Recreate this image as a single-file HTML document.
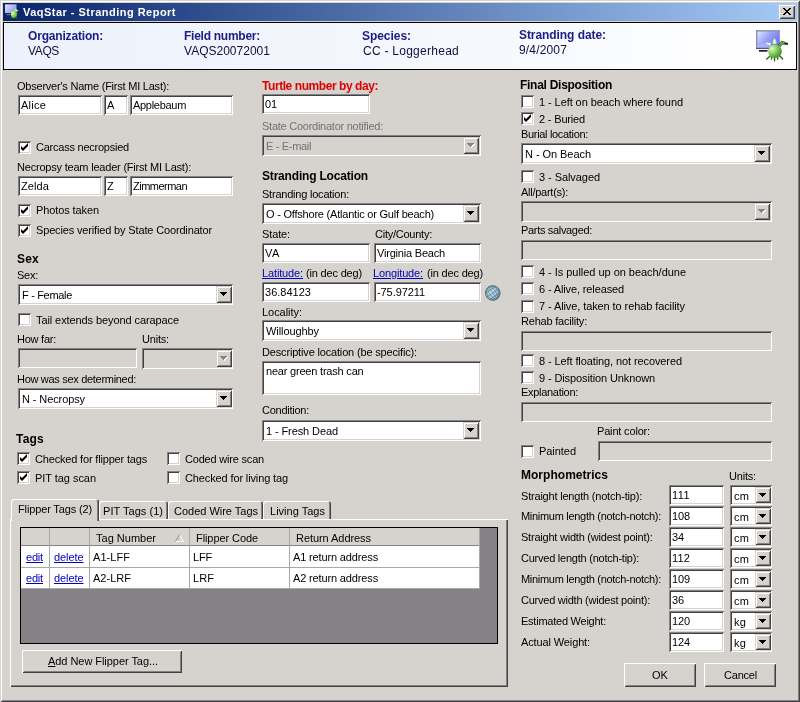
<!DOCTYPE html>
<html><head><meta charset="utf-8"><title>VaqStar - Stranding Report</title>
<style>
html,body{margin:0;padding:0;}
body{width:800px;height:702px;overflow:hidden;background:#d6d3ce;font-family:"Liberation Sans",sans-serif;font-size:11px;color:#000;}
#win{position:relative;width:800px;height:702px;overflow:hidden;background:transparent;will-change:transform;}
#win div{position:absolute;box-sizing:border-box;}
.t{white-space:nowrap;line-height:13px;font-size:11px;}
.b{font-weight:bold;}
.h12{font-size:12px;line-height:14px;font-weight:bold;}
.hd{font-size:12px;line-height:14px;color:#0e0e40;}
.hdb{font-weight:bold;color:#1c1c84;}
.red{color:#e00000;font-weight:bold;font-size:12px;line-height:14px;}
.gr{color:#737173;}
.lnk{color:#0000c0;text-decoration:underline;}
.wh{color:#fff;}
.tb{background:#fff;box-shadow:inset 1px 1px 0 #848284,inset -1px -1px 0 #fff,inset 2px 2px 0 #424142,inset -2px -2px 0 #d6d3ce;}
.tb.dis{background:#d6d3ce;}
.ck{width:13px;height:13px;background:#fff;box-shadow:inset 1px 1px 0 #848284,inset -1px -1px 0 #fff,inset 2px 2px 0 #424142,inset -2px -2px 0 #d6d3ce;}
.ck svg{position:absolute;left:0;top:0;}
.dd{background:#d6d3ce;box-shadow:inset 1px 1px 0 #d6d3ce,inset -1px -1px 0 #424142,inset 2px 2px 0 #fff,inset -2px -2px 0 #848284;}
.btn{background:#d6d3ce;box-shadow:inset 1px 1px 0 #fff,inset -1px -1px 0 #424142,inset 2px 2px 0 #d6d3ce,inset -2px -2px 0 #848284;}
</style></head>
<body>
<div id="win">
<div style="left:0;top:0;width:800px;height:702px;box-shadow:inset 1px 1px 0 #d6d3ce,inset -1px -1px 0 #424142,inset 2px 2px 0 #fff,inset -2px -2px 0 #848284"></div>
<div id="title" style="left:3px;top:3px;width:794px;height:18px;background:linear-gradient(to right,#08246b 0%,#a5cbf7 100%)"></div>
<svg style="position:absolute;left:3px;top:3px" width="18" height="18" viewBox="3 3 18 18"><defs><linearGradient id="scr2" x1="0" y1="0" x2="1" y2="0.800"><stop offset="0" stop-color="#e4e6ff"/><stop offset="1" stop-color="#8890ee"/></linearGradient><radialGradient id="shell2" cx="0.300" cy="0.350" r="0.800"><stop offset="0" stop-color="#dcf8c0"/><stop offset="0.500" stop-color="#8cd858"/><stop offset="1" stop-color="#3c8a20"/></radialGradient></defs><rect x="5" y="4.400" width="11.500" height="8.600" fill="url(#scr2)"/><rect x="6.500" y="14.300" width="4" height="0.800" fill="#9098c0"/><path d="M13.600 11.300L15.800 8.600L17.200 10L18.800 10.800L17 11.600z" fill="#c8f0a8"/><path d="M11.600 17.200L10.800 18.400M16.400 17.200L17 18.300M14 17.800L14 18.800" stroke="#2c6a1a" stroke-width="0.900" stroke-linecap="round"/><ellipse cx="14" cy="14.300" rx="3.200" ry="3.700" fill="url(#shell2)"/></svg>
<div id="t1" class="t b wh" style="left:23px;top:6px;letter-spacing:0.478px;">VaqStar - Stranding Report</div>
<div class="btn" style="left:779px;top:5px;width:16px;height:14px"></div>
<svg style="position:absolute;left:783px;top:8px" width="8" height="7" viewBox="0 0 8 7"><path d="M0 0h2v1h1v1h2v-1h1v-1h2v1h-1v1h-1v1h-1v1h1v1h1v1h1v1h-2v-1h-1v-1h-2v1h-1v1h-2v-1h1v-1h1v-1h1v-1h-1v-1h-1v-1h-1z" fill="#000" shape-rendering="crispEdges"/></svg>
<div style="left:3px;top:22px;width:794px;height:48px;background:linear-gradient(to right,#ecf1fb 0%,#f6f8fd 60%,#ffffff 95%);border:1px solid #000"></div>
<div id="t2" class="t hd hdb" style="left:28px;top:29px;letter-spacing:-0.180px;">Organization:</div>
<div id="t3" class="t hd" style="left:28px;top:44px;letter-spacing:-0.367px;">VAQS</div>
<div id="t4" class="t hd hdb" style="left:184px;top:29px;letter-spacing:-0.257px;">Field number:</div>
<div id="t5" class="t hd" style="left:184px;top:44px;letter-spacing:0.012px;">VAQS20072001</div>
<div id="t6" class="t hd hdb" style="left:362px;top:29px;letter-spacing:-0.045px;">Species:</div>
<div id="t7" class="t hd" style="left:363px;top:44px;letter-spacing:0.263px;">CC - Loggerhead</div>
<div id="t8" class="t hd hdb" style="left:519px;top:28px;letter-spacing:-0.068px;">Stranding date:</div>
<div id="t9" class="t hd" style="left:519px;top:43px;letter-spacing:0.160px;">9/4/2007</div>
<svg style="position:absolute;left:750px;top:26px" width="44" height="40" viewBox="0 0 44 40"><defs><linearGradient id="scr" x1="0" y1="0" x2="1" y2="0.600"><stop offset="0" stop-color="#e4e6ff"/><stop offset="0.500" stop-color="#9aa2f6"/><stop offset="1" stop-color="#6c76ee"/></linearGradient><radialGradient id="shell" cx="0.280" cy="0.320" r="0.850"><stop offset="0" stop-color="#e0f6d0"/><stop offset="0.400" stop-color="#90d264"/><stop offset="1" stop-color="#34801c"/></radialGradient></defs><rect x="6" y="4.300" width="23.900" height="18.500" fill="#a4aacc"/><rect x="6" y="4.300" width="23.900" height="1.300" fill="#858aa6"/><rect x="6" y="4.300" width="1.500" height="18" fill="#8a90b8"/><rect x="7.500" y="5.600" width="22" height="16.300" fill="url(#scr)"/><path d="M7.500 19.800C12 18.500 16 16 21 16.200L21 21.900H7.500z" fill="#b4bcf6" opacity="0.700"/><rect x="6" y="21.800" width="23.900" height="1.100" fill="#4a5078"/><rect x="9" y="24" width="8.500" height="1.700" fill="#1c1c24"/><path d="M15.400 17.300L17 16.500L21 17.600L20.200 19.400L17.500 18.300z" fill="#e8f6e4"/><path d="M28.300 19L31.500 15L34 15.800L37.900 17.500L37.600 18.700L32.200 18.300L30.600 20.600z" fill="#62b03a" stroke="#1e3c14" stroke-width="0.600"/><path d="M34.500 17.200L37.800 17.900" stroke="#10200c" stroke-width="1.100"/><path d="M20.200 29.900L16.700 33.100M29.800 29.900L32.600 32.900M24.500 31.500L24.500 34.800M21.800 31L21.400 33.100M27.500 31L27.900 33" stroke="#2a6418" stroke-width="1.400" stroke-linecap="round"/><path d="M24.500 12C26.500 14.300 26.800 16.300 26.300 18L22.800 18C22.200 16.300 22.600 14.300 24.500 12z" fill="#bfe8ac"/><ellipse cx="25" cy="25.200" rx="6.800" ry="6.800" fill="url(#shell)"/><path d="M24.500 13.300C25.500 14.600 25.600 15.900 25.200 17.200L23.800 17.200C23.400 15.900 23.600 14.600 24.500 13.300z" fill="#f6fff2"/></svg>
<div id="t10" class="t " style="left:17px;top:80px;letter-spacing:-0.225px;">Observer's Name (First MI Last):</div>
<div class="tb" style="left:18px;top:95px;width:84px;height:20px"></div>
<div id="t11" class="t in" style="left:21px;top:99px;letter-spacing:0.231px;">Alice</div>
<div class="tb" style="left:104px;top:95px;width:24px;height:20px"></div>
<div id="t12" class="t in" style="left:107px;top:99px;letter-spacing:0.656px;">A</div>
<div class="tb" style="left:130px;top:95px;width:103px;height:20px"></div>
<div id="t13" class="t in" style="left:133px;top:99px;letter-spacing:-0.295px;">Applebaum</div>
<div class="ck" style="left:18px;top:141px"><svg width="13" height="13" viewBox="0 0 13 13"><path d="M3 5v3l2 2 5-5V2L5 7z" fill="#000"/></svg></div>
<div id="t14" class="t " style="left:36px;top:141px;letter-spacing:-0.234px;">Carcass necropsied</div>
<div id="t15" class="t " style="left:17px;top:161px;letter-spacing:-0.204px;">Necropsy team leader (First MI Last):</div>
<div class="tb" style="left:18px;top:176px;width:84px;height:20px"></div>
<div id="t16" class="t in" style="left:21px;top:180px;letter-spacing:0.094px;">Zelda</div>
<div class="tb" style="left:104px;top:176px;width:24px;height:20px"></div>
<div id="t17" class="t in" style="left:107px;top:180px;letter-spacing:1.266px;">Z</div>
<div class="tb" style="left:130px;top:176px;width:103px;height:20px"></div>
<div id="t18" class="t in" style="left:133px;top:180px;letter-spacing:-0.519px;">Zimmerman</div>
<div class="ck" style="left:18px;top:204px"><svg width="13" height="13" viewBox="0 0 13 13"><path d="M3 5v3l2 2 5-5V2L5 7z" fill="#000"/></svg></div>
<div id="t19" class="t " style="left:36px;top:204px;letter-spacing:-0.102px;">Photos taken</div>
<div class="ck" style="left:18px;top:224px"><svg width="13" height="13" viewBox="0 0 13 13"><path d="M3 5v3l2 2 5-5V2L5 7z" fill="#000"/></svg></div>
<div id="t20" class="t " style="left:36px;top:224px;letter-spacing:-0.152px;">Species verified by State Coordinator</div>
<div id="t21" class="t h12" style="left:17px;top:252px;letter-spacing:0.214px;">Sex</div>
<div id="t22" class="t " style="left:17px;top:269px;letter-spacing:-0.254px;">Sex:</div>
<div class="tb" style="left:18px;top:284px;width:215px;height:21px"></div>
<div class="dd" style="left:216px;top:286px;width:16px;height:17px"><svg width="8" height="5" viewBox="0 0 8 5" style="position:absolute;left:4px;top:6px"><path d="M0 0h7v1h-1v1h-1v1h-1v1h-1v-1h-1v-1h-1v-1h-1z" fill="#000" shape-rendering="crispEdges"/></svg></div>
<div id="t23" class="t in" style="left:22px;top:289px;letter-spacing:-0.319px;">F - Female</div>
<div class="ck" style="left:18px;top:313px"></div>
<div id="t24" class="t " style="left:36px;top:314px;letter-spacing:-0.091px;">Tail extends beyond carapace</div>
<div id="t25" class="t " style="left:17px;top:333px;letter-spacing:-0.246px;">How far:</div>
<div id="t26" class="t " style="left:142px;top:333px;letter-spacing:-0.188px;">Units:</div>
<div class="tb dis" style="left:18px;top:348px;width:119px;height:20px"></div>
<div class="tb dis" style="left:142px;top:348px;width:91px;height:21px"></div>
<div class="dd" style="left:216px;top:350px;width:16px;height:17px"><svg width="8" height="5" viewBox="0 0 8 5" style="position:absolute;left:4px;top:6px"><path d="M1 1h7v1h-1v1h-1v1h-1v1h-1v-1h-1v-1h-1v-1h-1z" fill="#fff" shape-rendering="crispEdges"/><path d="M0 0h7v1h-1v1h-1v1h-1v1h-1v-1h-1v-1h-1v-1h-1z" fill="#848284" shape-rendering="crispEdges"/></svg></div>
<div id="t27" class="t " style="left:17px;top:373px;letter-spacing:-0.302px;">How was sex determined:</div>
<div class="tb" style="left:18px;top:388px;width:215px;height:21px"></div>
<div class="dd" style="left:216px;top:390px;width:16px;height:17px"><svg width="8" height="5" viewBox="0 0 8 5" style="position:absolute;left:4px;top:6px"><path d="M0 0h7v1h-1v1h-1v1h-1v1h-1v-1h-1v-1h-1v-1h-1z" fill="#000" shape-rendering="crispEdges"/></svg></div>
<div id="t28" class="t in" style="left:22px;top:393px;letter-spacing:-0.099px;">N - Necropsy</div>
<div id="t29" class="t h12" style="left:16px;top:432px;letter-spacing:0.219px;">Tags</div>
<div class="ck" style="left:17px;top:452px"><svg width="13" height="13" viewBox="0 0 13 13"><path d="M3 5v3l2 2 5-5V2L5 7z" fill="#000"/></svg></div>
<div id="t30" class="t " style="left:35px;top:453px;letter-spacing:-0.174px;">Checked for flipper tags</div>
<div class="ck" style="left:167px;top:452px"></div>
<div id="t31" class="t " style="left:185px;top:453px;letter-spacing:-0.196px;">Coded wire scan</div>
<div class="ck" style="left:17px;top:471px"><svg width="13" height="13" viewBox="0 0 13 13"><path d="M3 5v3l2 2 5-5V2L5 7z" fill="#000"/></svg></div>
<div id="t32" class="t " style="left:35px;top:472px;letter-spacing:-0.047px;">PIT tag scan</div>
<div class="ck" style="left:167px;top:471px"></div>
<div id="t33" class="t " style="left:185px;top:472px;letter-spacing:-0.126px;">Checked for living tag</div>
<div style="left:10px;top:519px;width:498px;height:168px;box-shadow:inset 1px 1px 0 #fff,inset -1px -1px 0 #424142,inset -2px -2px 0 #848284"></div>
<div style="left:99px;top:501px;width:69px;height:18px;background:#d6d3ce;border-radius:3px 3px 0 0;box-shadow:inset 1px 1px 0 #fff,inset -1px 0 0 #424142,inset -2px 0 0 #848284"></div>
<div id="t34" class="t " style="left:103px;top:505px;letter-spacing:0.040px;">PIT Tags (1)</div>
<div style="left:168px;top:501px;width:95px;height:18px;background:#d6d3ce;border-radius:3px 3px 0 0;box-shadow:inset 1px 1px 0 #fff,inset -1px 0 0 #424142,inset -2px 0 0 #848284"></div>
<div id="t35" class="t " style="left:174px;top:505px;letter-spacing:-0.011px;">Coded Wire Tags</div>
<div style="left:263px;top:501px;width:68px;height:18px;background:#d6d3ce;border-radius:3px 3px 0 0;box-shadow:inset 1px 1px 0 #fff,inset -1px 0 0 #424142,inset -2px 0 0 #848284"></div>
<div id="t36" class="t " style="left:270px;top:505px;letter-spacing:0.014px;">Living Tags</div>
<div style="left:11px;top:499px;width:88px;height:22px;background:#d6d3ce;border-radius:3px 3px 0 0;box-shadow:inset 1px 1px 0 #fff,inset -1px 0 0 #424142,inset -2px 0 0 #848284"></div>
<div id="t37" class="t " style="left:18px;top:503px;letter-spacing:-0.139px;">Flipper Tags (2)</div>
<div style="left:20px;top:527px;width:478px;height:117px;background:#848284;border:1px solid #000"></div>
<div style="left:21px;top:528px;width:459px;height:18px;background:#d6d3ce;border-bottom:1px solid #848284"></div>
<div style="left:49px;top:528px;width:1px;height:60px;background:#a0a0a0"></div>
<div style="left:89px;top:528px;width:1px;height:60px;background:#a0a0a0"></div>
<div style="left:189px;top:528px;width:1px;height:60px;background:#a0a0a0"></div>
<div style="left:289px;top:528px;width:1px;height:60px;background:#a0a0a0"></div>
<div style="left:21px;top:546px;width:459px;height:42px;background:#fff"></div>
<div style="left:49px;top:528px;width:1px;height:61px;background:#a8a8a8"></div>
<div style="left:89px;top:528px;width:1px;height:61px;background:#a8a8a8"></div>
<div style="left:189px;top:528px;width:1px;height:61px;background:#a8a8a8"></div>
<div style="left:289px;top:528px;width:1px;height:61px;background:#a8a8a8"></div>
<div style="left:21px;top:567px;width:459px;height:1px;background:#a8a8a8"></div>
<div style="left:21px;top:588px;width:459px;height:1px;background:#a8a8a8"></div>
<div style="left:479px;top:528px;width:1px;height:61px;background:#a8a8a8"></div>
<div id="t38" class="t " style="left:96px;top:532px;letter-spacing:0.008px;">Tag Number</div>
<div id="t39" class="t " style="left:196px;top:532px;letter-spacing:-0.082px;">Flipper Code</div>
<div id="t40" class="t " style="left:296px;top:532px;letter-spacing:-0.059px;">Return Address</div>
<svg style="position:absolute;left:175px;top:534px" width="9" height="8" viewBox="0 0 9 8"><path d="M4.500 0.500L0.500 7.500H8.500z" fill="#d6d3ce" stroke="#fff" stroke-width="1"/><path d="M4.500 0.500L0.500 7.500" stroke="#848284" stroke-width="1" fill="none"/></svg>
<div id="t41" class="t lnk" style="left:26px;top:551px;letter-spacing:-0.188px;">edit</div>
<div id="t42" class="t lnk" style="left:54px;top:551px;letter-spacing:-0.081px;">delete</div>
<div id="t43" class="t " style="left:93px;top:551px;letter-spacing:0.052px;">A1-LFF</div>
<div id="t44" class="t " style="left:193px;top:551px;letter-spacing:-0.188px;">LFF</div>
<div id="t45" class="t " style="left:293px;top:551px;letter-spacing:-0.143px;">A1 return address</div>
<div id="t46" class="t lnk" style="left:26px;top:572px;letter-spacing:-0.188px;">edit</div>
<div id="t47" class="t lnk" style="left:54px;top:572px;letter-spacing:-0.081px;">delete</div>
<div id="t48" class="t " style="left:93px;top:572px;letter-spacing:0.016px;">A2-LRF</div>
<div id="t49" class="t " style="left:193px;top:572px;letter-spacing:0.073px;">LRF</div>
<div id="t50" class="t " style="left:293px;top:572px;letter-spacing:-0.143px;">A2 return address</div>
<div class="btn" style="left:22px;top:650px;width:160px;height:23px"></div>
<div id="t51" class="t " style="left:48px;top:655px;letter-spacing:-0.050px;"><u>A</u>dd New Flipper Tag...</div>
<div id="t52" class="t red" style="left:262px;top:79px;letter-spacing:-0.435px;">Turtle number by day:</div>
<div class="tb" style="left:262px;top:94px;width:108px;height:20px"></div>
<div id="t53" class="t in" style="left:265px;top:98px;letter-spacing:-0.125px;">01</div>
<div id="t54" class="t gr" style="left:262px;top:120px;letter-spacing:-0.252px;">State Coordinator notified:</div>
<div class="tb dis" style="left:262px;top:135px;width:219px;height:21px"></div>
<div class="dd" style="left:463px;top:137px;width:16px;height:17px"><svg width="8" height="5" viewBox="0 0 8 5" style="position:absolute;left:4px;top:6px"><path d="M1 1h7v1h-1v1h-1v1h-1v1h-1v-1h-1v-1h-1v-1h-1z" fill="#fff" shape-rendering="crispEdges"/><path d="M0 0h7v1h-1v1h-1v1h-1v1h-1v-1h-1v-1h-1v-1h-1z" fill="#848284" shape-rendering="crispEdges"/></svg></div>
<div id="t55" class="t in gr" style="left:266px;top:140px;letter-spacing:-0.328px;">E - E-mail</div>
<div id="t56" class="t h12" style="left:262px;top:169px;letter-spacing:-0.186px;">Stranding Location</div>
<div id="t57" class="t " style="left:262px;top:188px;letter-spacing:-0.217px;">Stranding location:</div>
<div class="tb" style="left:262px;top:203px;width:219px;height:21px"></div>
<div class="dd" style="left:463px;top:205px;width:16px;height:17px"><svg width="8" height="5" viewBox="0 0 8 5" style="position:absolute;left:4px;top:6px"><path d="M0 0h7v1h-1v1h-1v1h-1v1h-1v-1h-1v-1h-1v-1h-1z" fill="#000" shape-rendering="crispEdges"/></svg></div>
<div id="t58" class="t in" style="left:266px;top:208px;letter-spacing:-0.213px;">O - Offshore (Atlantic or Gulf beach)</div>
<div id="t59" class="t " style="left:262px;top:228px;letter-spacing:-0.125px;">State:</div>
<div id="t60" class="t " style="left:375px;top:228px;letter-spacing:-0.243px;">City/County:</div>
<div class="tb" style="left:262px;top:243px;width:108px;height:20px"></div>
<div id="t61" class="t in" style="left:265px;top:247px;letter-spacing:0.570px;">VA</div>
<div class="tb" style="left:374px;top:243px;width:107px;height:20px"></div>
<div id="t62" class="t in" style="left:377px;top:247px;letter-spacing:-0.195px;">Virginia Beach</div>
<div id="t63" class="t lnk" style="left:262px;top:267px;letter-spacing:-0.134px;">Latitude:</div>
<div id="t64" class="t " style="left:306px;top:267px;letter-spacing:-0.174px;">(in dec deg)</div>
<div id="t65" class="t lnk" style="left:373px;top:267px;letter-spacing:-0.139px;">Longitude:</div>
<div id="t66" class="t " style="left:427px;top:267px;letter-spacing:-0.174px;">(in dec deg)</div>
<div class="tb" style="left:262px;top:282px;width:108px;height:20px"></div>
<div id="t67" class="t in" style="left:265px;top:286px;letter-spacing:0.014px;">36.84123</div>
<div class="tb" style="left:374px;top:282px;width:107px;height:20px"></div>
<div id="t68" class="t in" style="left:377px;top:286px;letter-spacing:-0.082px;">-75.97211</div>
<svg style="position:absolute;left:484px;top:284px" width="18" height="18" viewBox="0 0 18 18"><defs><radialGradient id="gl" cx="0.400" cy="0.450" r="0.650"><stop offset="0" stop-color="#c8e8f2"/><stop offset="0.600" stop-color="#a4c8d8"/><stop offset="1" stop-color="#6e8c9c"/></radialGradient></defs><circle cx="8.800" cy="9" r="7.300" fill="url(#gl)" stroke="#5c6c6c" stroke-width="1"/><g transform="rotate(-35 8.800 9)" stroke="#4c6c7c" stroke-width="0.700" fill="none" opacity="0.850"><ellipse cx="8.800" cy="9" rx="3" ry="7.300"/><ellipse cx="8.800" cy="9" rx="5.800" ry="7.300"/><path d="M8.800 1.700V16.300M1.500 9H16.100M2.600 5.200H15M2.600 12.800H15"/></g></svg>
<div id="t69" class="t " style="left:262px;top:306px;letter-spacing:-0.040px;">Locality:</div>
<div class="tb" style="left:262px;top:320px;width:219px;height:21px"></div>
<div class="dd" style="left:463px;top:322px;width:16px;height:17px"><svg width="8" height="5" viewBox="0 0 8 5" style="position:absolute;left:4px;top:6px"><path d="M0 0h7v1h-1v1h-1v1h-1v1h-1v-1h-1v-1h-1v-1h-1z" fill="#000" shape-rendering="crispEdges"/></svg></div>
<div id="t70" class="t in" style="left:266px;top:325px;letter-spacing:-0.081px;">Willoughby</div>
<div id="t71" class="t " style="left:262px;top:346px;letter-spacing:-0.166px;">Descriptive location (be specific):</div>
<div class="tb" style="left:262px;top:361px;width:219px;height:34px"></div>
<div id="t72" class="t in" style="left:266px;top:365px;letter-spacing:-0.201px;">near green trash can</div>
<div id="t73" class="t " style="left:262px;top:404px;letter-spacing:-0.255px;">Condition:</div>
<div class="tb" style="left:262px;top:420px;width:219px;height:21px"></div>
<div class="dd" style="left:463px;top:422px;width:16px;height:17px"><svg width="8" height="5" viewBox="0 0 8 5" style="position:absolute;left:4px;top:6px"><path d="M0 0h7v1h-1v1h-1v1h-1v1h-1v-1h-1v-1h-1v-1h-1z" fill="#000" shape-rendering="crispEdges"/></svg></div>
<div id="t74" class="t in" style="left:266px;top:425px;letter-spacing:-0.098px;">1 - Fresh Dead</div>
<div id="t75" class="t h12" style="left:520px;top:78px;letter-spacing:-0.275px;">Final Disposition</div>
<div class="ck" style="left:521px;top:95px"></div>
<div id="t76" class="t " style="left:539px;top:96px;letter-spacing:-0.075px;">1 - Left on beach where found</div>
<div class="ck" style="left:521px;top:112px"><svg width="13" height="13" viewBox="0 0 13 13"><path d="M3 5v3l2 2 5-5V2L5 7z" fill="#000"/></svg></div>
<div id="t77" class="t " style="left:539px;top:113px;letter-spacing:-0.170px;">2 - Buried</div>
<div id="t78" class="t " style="left:521px;top:128px;letter-spacing:-0.322px;">Burial location:</div>
<div class="tb" style="left:521px;top:143px;width:251px;height:21px"></div>
<div class="dd" style="left:754px;top:145px;width:16px;height:17px"><svg width="8" height="5" viewBox="0 0 8 5" style="position:absolute;left:4px;top:6px"><path d="M0 0h7v1h-1v1h-1v1h-1v1h-1v-1h-1v-1h-1v-1h-1z" fill="#000" shape-rendering="crispEdges"/></svg></div>
<div id="t79" class="t in" style="left:525px;top:148px;letter-spacing:-0.053px;">N - On Beach</div>
<div class="ck" style="left:521px;top:170px"></div>
<div id="t80" class="t " style="left:539px;top:171px;letter-spacing:-0.064px;">3 - Salvaged</div>
<div id="t81" class="t " style="left:521px;top:186px;letter-spacing:-0.260px;">All/part(s):</div>
<div class="tb dis" style="left:521px;top:201px;width:251px;height:21px"></div>
<div class="dd" style="left:754px;top:203px;width:16px;height:17px"><svg width="8" height="5" viewBox="0 0 8 5" style="position:absolute;left:4px;top:6px"><path d="M1 1h7v1h-1v1h-1v1h-1v1h-1v-1h-1v-1h-1v-1h-1z" fill="#fff" shape-rendering="crispEdges"/><path d="M0 0h7v1h-1v1h-1v1h-1v1h-1v-1h-1v-1h-1v-1h-1z" fill="#848284" shape-rendering="crispEdges"/></svg></div>
<div id="t82" class="t " style="left:521px;top:224px;letter-spacing:-0.322px;">Parts salvaged:</div>
<div class="tb dis" style="left:521px;top:240px;width:251px;height:20px"></div>
<div class="ck" style="left:521px;top:265px"></div>
<div id="t83" class="t " style="left:539px;top:266px;letter-spacing:-0.034px;">4 - Is pulled up on beach/dune</div>
<div class="ck" style="left:521px;top:282px"></div>
<div id="t84" class="t " style="left:539px;top:283px;letter-spacing:-0.128px;">6 - Alive, released</div>
<div class="ck" style="left:521px;top:300px"></div>
<div id="t85" class="t " style="left:539px;top:300px;letter-spacing:-0.094px;">7 - Alive, taken to rehab facility</div>
<div id="t86" class="t " style="left:521px;top:315px;letter-spacing:-0.206px;">Rehab facility:</div>
<div class="tb dis" style="left:521px;top:331px;width:251px;height:20px"></div>
<div class="ck" style="left:521px;top:354px"></div>
<div id="t87" class="t " style="left:539px;top:355px;letter-spacing:-0.099px;">8 - Left floating, not recovered</div>
<div class="ck" style="left:521px;top:371px"></div>
<div id="t88" class="t " style="left:539px;top:372px;letter-spacing:-0.114px;">9 - Disposition Unknown</div>
<div id="t89" class="t " style="left:521px;top:386px;letter-spacing:-0.296px;">Explanation:</div>
<div class="tb dis" style="left:521px;top:402px;width:251px;height:20px"></div>
<div id="t90" class="t " style="left:597px;top:425px;letter-spacing:-0.169px;">Paint color:</div>
<div class="ck" style="left:521px;top:445px"></div>
<div id="t91" class="t " style="left:539px;top:445px;letter-spacing:-0.045px;">Painted</div>
<div class="tb dis" style="left:598px;top:441px;width:174px;height:20px"></div>
<div id="t92" class="t h12" style="left:521px;top:468px;letter-spacing:0.024px;">Morphometrics</div>
<div id="t93" class="t " style="left:729px;top:470px;letter-spacing:-0.188px;">Units:</div>
<div id="t94" class="t " style="left:521px;top:490px;letter-spacing:-0.199px;">Straight length (notch-tip):</div>
<div class="tb" style="left:669px;top:485px;width:55px;height:20px"></div>
<div id="t95" class="t in" style="left:672px;top:489px;letter-spacing:0.422px;">111</div>
<div class="tb" style="left:730px;top:485px;width:42px;height:20px"></div>
<div class="dd" style="left:755px;top:487px;width:16px;height:16px"><svg width="8" height="5" viewBox="0 0 8 5" style="position:absolute;left:4px;top:6px"><path d="M0 0h7v1h-1v1h-1v1h-1v1h-1v-1h-1v-1h-1v-1h-1z" fill="#000" shape-rendering="crispEdges"/></svg></div>
<div id="t96" class="t in" style="left:734px;top:490px;letter-spacing:0.164px;">cm</div>
<div id="t97" class="t " style="left:521px;top:510px;letter-spacing:-0.295px;">Minimum length (notch-notch):</div>
<div class="tb" style="left:669px;top:506px;width:55px;height:20px"></div>
<div id="t98" class="t in" style="left:672px;top:510px;letter-spacing:-0.120px;">108</div>
<div class="tb" style="left:730px;top:506px;width:42px;height:20px"></div>
<div class="dd" style="left:755px;top:508px;width:16px;height:16px"><svg width="8" height="5" viewBox="0 0 8 5" style="position:absolute;left:4px;top:6px"><path d="M0 0h7v1h-1v1h-1v1h-1v1h-1v-1h-1v-1h-1v-1h-1z" fill="#000" shape-rendering="crispEdges"/></svg></div>
<div id="t99" class="t in" style="left:734px;top:511px;letter-spacing:0.164px;">cm</div>
<div id="t100" class="t " style="left:521px;top:531px;letter-spacing:-0.222px;">Straight width (widest point):</div>
<div class="tb" style="left:669px;top:527px;width:55px;height:20px"></div>
<div id="t101" class="t in" style="left:672px;top:531px;letter-spacing:-0.125px;">34</div>
<div class="tb" style="left:730px;top:527px;width:42px;height:20px"></div>
<div class="dd" style="left:755px;top:529px;width:16px;height:16px"><svg width="8" height="5" viewBox="0 0 8 5" style="position:absolute;left:4px;top:6px"><path d="M0 0h7v1h-1v1h-1v1h-1v1h-1v-1h-1v-1h-1v-1h-1z" fill="#000" shape-rendering="crispEdges"/></svg></div>
<div id="t102" class="t in" style="left:734px;top:532px;letter-spacing:0.164px;">cm</div>
<div id="t103" class="t " style="left:521px;top:552px;letter-spacing:-0.236px;">Curved length (notch-tip):</div>
<div class="tb" style="left:669px;top:548px;width:55px;height:20px"></div>
<div id="t104" class="t in" style="left:672px;top:552px;letter-spacing:0.151px;">112</div>
<div class="tb" style="left:730px;top:548px;width:42px;height:20px"></div>
<div class="dd" style="left:755px;top:550px;width:16px;height:16px"><svg width="8" height="5" viewBox="0 0 8 5" style="position:absolute;left:4px;top:6px"><path d="M0 0h7v1h-1v1h-1v1h-1v1h-1v-1h-1v-1h-1v-1h-1z" fill="#000" shape-rendering="crispEdges"/></svg></div>
<div id="t105" class="t in" style="left:734px;top:553px;letter-spacing:0.164px;">cm</div>
<div id="t106" class="t " style="left:521px;top:573px;letter-spacing:-0.295px;">Minimum length (notch-notch):</div>
<div class="tb" style="left:669px;top:569px;width:55px;height:20px"></div>
<div id="t107" class="t in" style="left:672px;top:573px;letter-spacing:-0.120px;">109</div>
<div class="tb" style="left:730px;top:569px;width:42px;height:20px"></div>
<div class="dd" style="left:755px;top:571px;width:16px;height:16px"><svg width="8" height="5" viewBox="0 0 8 5" style="position:absolute;left:4px;top:6px"><path d="M0 0h7v1h-1v1h-1v1h-1v1h-1v-1h-1v-1h-1v-1h-1z" fill="#000" shape-rendering="crispEdges"/></svg></div>
<div id="t108" class="t in" style="left:734px;top:574px;letter-spacing:0.164px;">cm</div>
<div id="t109" class="t " style="left:521px;top:594px;letter-spacing:-0.241px;">Curved width (widest point):</div>
<div class="tb" style="left:669px;top:590px;width:55px;height:20px"></div>
<div id="t110" class="t in" style="left:672px;top:594px;letter-spacing:-0.125px;">36</div>
<div class="tb" style="left:730px;top:590px;width:42px;height:20px"></div>
<div class="dd" style="left:755px;top:592px;width:16px;height:16px"><svg width="8" height="5" viewBox="0 0 8 5" style="position:absolute;left:4px;top:6px"><path d="M0 0h7v1h-1v1h-1v1h-1v1h-1v-1h-1v-1h-1v-1h-1z" fill="#000" shape-rendering="crispEdges"/></svg></div>
<div id="t111" class="t in" style="left:734px;top:595px;letter-spacing:0.164px;">cm</div>
<div id="t112" class="t " style="left:521px;top:615px;letter-spacing:-0.239px;">Estimated Weight:</div>
<div class="tb" style="left:669px;top:611px;width:55px;height:20px"></div>
<div id="t113" class="t in" style="left:672px;top:615px;letter-spacing:-0.120px;">120</div>
<div class="tb" style="left:730px;top:611px;width:42px;height:20px"></div>
<div class="dd" style="left:755px;top:613px;width:16px;height:16px"><svg width="8" height="5" viewBox="0 0 8 5" style="position:absolute;left:4px;top:6px"><path d="M0 0h7v1h-1v1h-1v1h-1v1h-1v-1h-1v-1h-1v-1h-1z" fill="#000" shape-rendering="crispEdges"/></svg></div>
<div id="t114" class="t in" style="left:734px;top:616px;letter-spacing:0.188px;">kg</div>
<div id="t115" class="t " style="left:521px;top:636px;letter-spacing:-0.124px;">Actual Weight:</div>
<div class="tb" style="left:669px;top:632px;width:55px;height:20px"></div>
<div id="t116" class="t in" style="left:672px;top:636px;letter-spacing:-0.120px;">124</div>
<div class="tb" style="left:730px;top:632px;width:42px;height:20px"></div>
<div class="dd" style="left:755px;top:634px;width:16px;height:16px"><svg width="8" height="5" viewBox="0 0 8 5" style="position:absolute;left:4px;top:6px"><path d="M0 0h7v1h-1v1h-1v1h-1v1h-1v-1h-1v-1h-1v-1h-1z" fill="#000" shape-rendering="crispEdges"/></svg></div>
<div id="t117" class="t in" style="left:734px;top:637px;letter-spacing:0.188px;">kg</div>
<div class="btn" style="left:624px;top:663px;width:72px;height:24px"></div>
<div id="t118" class="t " style="left:652px;top:669px;letter-spacing:0.047px;">OK</div>
<div class="btn" style="left:704px;top:663px;width:72px;height:24px"></div>
<div id="t119" class="t " style="left:724px;top:669px;letter-spacing:-0.208px;">Cancel</div>
</div>
</body></html>
